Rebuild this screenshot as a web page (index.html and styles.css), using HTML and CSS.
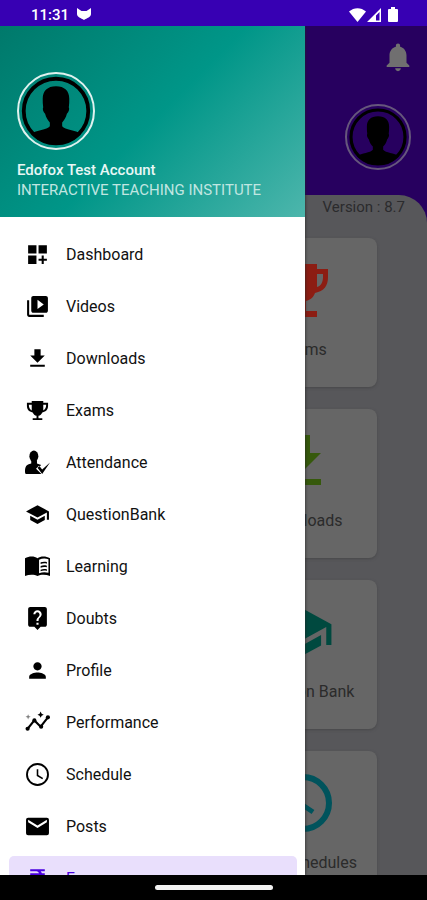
FILE: index.html
```html
<!DOCTYPE html>
<html lang="en">
<head>
<meta charset="utf-8">
<meta name="viewport" content="width=device-width, initial-scale=1">
<title>Edofox</title>
<link rel="stylesheet" href="styles.css">
</head>
<body>
<svg width="0" height="0" class="defs" aria-hidden="true">
  <symbol id="person" viewBox="0 0 78 78">
    <circle cx="39" cy="39" r="34" fill="none" stroke="#000" stroke-width="4"/>
    <path d="M39 13c-9 0-14 5-14 13 0 3 0 6 .5 9-1 2 0 5 2 7 1 4 3 7 5 9v4c-3 4-14 4-20 8 6 7 16 11 26.500 11s20.500-4 26.500-11c-6-4-17-4-20-8v-4c2-2 4-5 5-9 2-2 3-5 2-7 .5-3 .5-6 .5-9 0-8-5-13-14-13z"/>
  </symbol>
  <symbol id="cap" viewBox="0 0 24 24"><path d="M5 13.180v4L12 21l7-3.820v-4L12 17l-7-3.820zM12 3L1 9l11 6 9-4.910V17h2V9L12 3z"/></symbol>
</svg>
<div class="phone">
  <header class="status">
    <span class="clock">11:31</span>
    <svg class="fox" viewBox="0 0 14 13"><path d="M0 0l4.500 3h5L14 0v6c0 3-4 4-7 6-3-2-7-3-7-6z"/></svg>
    <span class="spacer"></span>
    <svg class="wifi" viewBox="0 0 17 14"><path d="M0 3.500C5-1 12-1 17 3.500L8.500 14z"/></svg>
    <svg class="signal" viewBox="0 0 14 14"><path fill-rule="evenodd" d="M14 0v14H0zM12.500 4L9 7.500v5h3.500z"/></svg>
    <svg class="battery" viewBox="0 0 10 15"><path d="M3 0h4v2h2q1 0 1 1v11q0 1-1 1H1q-1 0-1-1V3q0-1 1-1h2z"/></svg>
  </header>
  <main class="screen">
    <section class="home">
      <div class="home-top">
        <button class="bell" aria-label="Notifications"><svg viewBox="0 0 24 24"><path d="M12 22c1.100 0 2-.9 2-2h-4c0 1.100.9 2 2 2zm6-6v-5c0-3.070-1.630-5.640-4.500-6.320V4c0-.83-.67-1.500-1.500-1.500s-1.500.67-1.500 1.500v.68C7.640 5.360 6 7.920 6 11v5l-2 2v1h16v-1l-2-2z"/></svg></button>
        <svg class="avatar avatar-small"><use href="#person"/></svg>
      </div>
      <div class="sheet">
        <p class="version">Version : 8.7</p>
        <div class="cards">
          <a class="card red" href="#"><svg viewBox="0 0 54 54"><path d="M13 1h28v5h11v8c0 9-4 14-13 16-2 5-5 7-9 8v10h11v6H13v-6h11V38c-4-1-7-3-9-8C6 28 2 23 2 14V6h11zm28 10v13c4-1 6-5 6-10v-3zM7 11v3c0 5 2 9 6 10V11z"/></svg><span>Exams</span></a>
          <a class="card green" href="#"><svg viewBox="0 0 54 54"><path d="M21 1h13v18h11L27 37 9 19h12zM9 45h36v6H9z"/></svg><span>Downloads</span></a>
          <a class="card teal" href="#"><svg viewBox="0 0 24 24"><use href="#cap"/></svg><span>Question Bank</span></a>
          <a class="card cyan" href="#"><svg viewBox="0 0 54 54"><circle cx="27" cy="27" r="26" fill="none" stroke="currentColor" stroke-width="6"/><path fill="none" stroke="currentColor" stroke-width="5" d="M25 13v15l12 8"/></svg><span>Test Schedules</span></a>
        </div>
      </div>
    </section>
    <aside class="drawer">
      <div class="account">
        <svg class="avatar"><use href="#person"/></svg>
        <p class="name">Edofox Test Account</p>
        <p class="school">INTERACTIVE TEACHING INSTITUTE</p>
      </div>
      <nav class="menu">
        <a href="#"><svg viewBox="0 0 24 24"><path d="M3 3h8v8H3zM13 3h8v8h-8zM3 13h8v8H3zM16 13h2v3h3v2h-3v3h-2v-3h-3v-2h3z"/></svg>Dashboard</a>
        <a href="#"><svg viewBox="0 0 24 24"><path d="M4 6H2v14c0 1.100.9 2 2 2h14v-2H4V6zm16-4H8c-1.100 0-2 .9-2 2v12c0 1.100.9 2 2 2h12c1.100 0 2-.9 2-2V4c0-1.100-.9-2-2-2zm-8 12.500v-9l6 4.500-6 4.500z"/></svg>Videos</a>
        <a href="#"><svg viewBox="0 0 24 24"><path d="M19 9h-4V3H9v6H5l7 7 7-7zM5 18v2h14v-2H5z"/></svg>Downloads</a>
        <a href="#"><svg viewBox="-1 -1 26 26"><path d="M6 2h12v2h5v3c0 4-2 6-6 7-1 2-2 3-4 3.500V20h4v2H7v-2h4v-2.500C9 17 8 16 7 14c-4-1-6-3-6-7V4h5zm12 4v6c2-1 3-3 3-6zM3 6c0 3 1 5 3 6V6z"/></svg>Exams</a>
        <a href="#"><svg viewBox="0 0 24 24"><ellipse cx="8.500" cy="6" rx="4.300" ry="5.500"/><path d="M6 10h5.500v3l4 1.500-3 3 3.500 5.500H1q-1 0-1-2c0-5 1-7 6-8z"/><path d="M12 16.500l4.500 4.500L24 13" fill="none" stroke="#fff" stroke-width="4"/><path d="M12 17l2-1.500 2.500 3.200L24 12l-7.500 11z"/></svg>Attendance</a>
        <a href="#"><svg viewBox="0 0 24 24"><use href="#cap"/></svg>QuestionBank</a>
        <a href="#"><svg viewBox="0 0 24 24"><path fill-rule="evenodd" d="M0 4c4-2 9-2 12 0 3-2 8-2 12 0v17c-4-1.500-9-1.500-12 0-3-1.500-8-1.500-12 0zm13.500 1.500v13c3-1.200 6-1.200 9-.5V5c-3-1-6-1-9 .5z"/><path d="M15 8c2-.8 4-.8 6-.3v1.600c-2-.5-4-.5-6 .3zm0 3.500c2-.8 4-.8 6-.3v1.600c-2-.5-4-.5-6 .3zm0 3.500c2-.8 4-.8 6-.3v1.600c-2-.5-4-.5-6 .3z"/></svg>Learning</a>
        <a href="#"><svg viewBox="0 0 24 24"><path d="M19 1H5c-1.100 0-2 .9-2 2v15c0 1.100.9 2 2 2h4l3 3 3-3h4c1.100 0 2-.9 2-2V3c0-1.100-.9-2-2-2zm-6 17h-2v-2h2v2zm2.070-7.750l-.9.920C13.450 11.900 13 12.500 13 14.500h-2v-.5c0-1.100.45-2.100 1.170-2.830l1.240-1.260c.37-.36.590-.86.590-1.410 0-1.100-.9-2.500-2-2.500s-2 .9-2 2H8c0-2.210 1.790-4 4-4s4 1.790 4 4c0 .88-.36 1.680-.93 2.250z"/></svg>Doubts</a>
        <a href="#"><svg viewBox="0 0 24 24"><path d="M12 12c2.210 0 4-1.790 4-4s-1.790-4-4-4-4 1.790-4 4 1.790 4 4 4zm0 2c-2.670 0-8 1.340-8 4v2h16v-2c0-2.660-5.330-4-8-4z"/></svg>Profile</a>
        <a href="#"><svg viewBox="0 0 24 24"><path fill="none" stroke="currentColor" stroke-width="2" d="M2.500 18L9 10l6 6 7-9"/><circle cx="2.500" cy="18" r="2"/><circle cx="9" cy="10" r="2"/><circle cx="15.500" cy="16" r="2"/><circle cx="22" cy="7" r="2"/><path d="M15 1.500l1 2 2 1-2 1-1 2-1-2-2-1 2-1z"/><path opacity=".5" d="M3 4l.7 1.800L5.500 6.500l-1.800.7L3 9l-.7-1.800L.5 6.500l1.800-.7z"/></svg>Performance</a>
        <a href="#"><svg viewBox="0 0 24 24"><path d="M12 1a11 11 0 1 0 0 22 11 11 0 0 0 0-22zm0 1.800a9.200 9.200 0 1 1 0 18.400 9.200 9.200 0 0 1 0-18.400z"/><path fill="none" stroke="currentColor" stroke-width="1.500" d="M12 7v6l5 3"/></svg>Schedule</a>
        <a href="#"><svg viewBox="0 0 24 24"><path d="M3 3.500h18q2 0 2 2v13q0 2-2 2H3q-2 0-2-2v-13q0-2 2-2zm0 2v2.300l9 5.600 9-5.600V5.500l-9 5.600z"/></svg>Posts</a>
        <a href="#" class="active"><svg viewBox="0 0 24 24"><path d="M5 3h14v2h-4c.6.600 1 1.300 1.200 2H19v2h-3c-.3 2.700-2.400 4-5 4l6 8h-3l-6-8v-2h3c1.600 0 2.600-.8 3-2H5V7h8.500C13 5.700 12 5 11 5H5z"/></svg>Fees</a>
      </nav>
    </aside>
  </main>
  <footer class="gesture"><span></span></footer>
</div>
</body>
</html>
```
FILE: styles.css
```css
* { box-sizing: border-box; }
body { margin: 0; font-family: Roboto, "Liberation Sans", sans-serif; }
p { margin: 0; }
a { color: inherit; text-decoration: none; }
svg { display: block; fill: currentColor; flex: none; }
.defs { position: absolute; }
.phone { height: 100vh; display: flex; flex-direction: column; overflow: hidden; background: #000; }

.status { display: flex; align-items: center; height: 26px; flex: none; padding: 3px 29px 0 31px; background: #3700b3; color: #fff; }
.clock { font-size: 15px; font-weight: 500; line-height: 20px; }
.fox { width: 14px; height: 13px; margin-left: 8px; }
.spacer { flex: 1; }
.wifi { width: 17px; height: 14px; }
.signal { width: 14px; height: 14px; margin: 0 7px 0 1px; }
.battery { width: 10px; height: 15px; }

.screen { position: relative; flex: 1; min-height: 0; overflow: hidden; }
.home { min-height: 100%; background: #27005f; }
.home-top { display: flex; flex-direction: column; align-items: flex-end; gap: 30px; height: 169px; padding: 14px 12px 0 0; }
.bell { padding: 0; border: 0; background: none; color: #706f70; }
.bell svg { width: 34px; height: 34px; }
.avatar { width: 78px; height: 78px; border: 2px solid #e0f2ef; border-radius: 50%; color: #000; }
.avatar-small { width: 66px; height: 66px; border-color: #66577c; margin-right: 4px; }
.sheet { min-height: 680px; background: #57575a; border-top-right-radius: 28px; }
.version { padding: 2px 22px 0 0; text-align: right; font-size: 15px; line-height: 20px; color: #2b2b2d; }
.cards { display: grid; grid-template-columns: 1fr 1fr; gap: 22px 30px; padding: 21px 50px 0; }
.card { grid-column: 2; display: flex; flex-direction: column; align-items: center; height: 149px; padding-top: 25px; background: #666; border-radius: 8px; box-shadow: 0 1px 3px #48484a; }
.card svg { width: 54px; height: 54px; }
.card span { margin-top: 23px; font-size: 16px; line-height: 20px; color: #2b2b2b; white-space: nowrap; }
.red svg { color: #8c1d13; }
.green svg { color: #36590c; }
.teal svg { color: #00493f; width: 62px; height: 62px; margin: -4px 0; }
.cyan svg { color: #00535c; overflow: visible; }

.drawer { position: absolute; top: 0; bottom: 0; left: 0; width: calc(100% - 122px); overflow: hidden; background: #fff; box-shadow: 0 0 3px #222; }
.account { height: 191px; padding: 46px 17px 0; background: linear-gradient(135deg, #00796b 0%, #009688 50%, #4db6ac 100%); color: #e8f7f5; white-space: nowrap; }
.name { margin-top: 10px; font-size: 15px; font-weight: 500; line-height: 20px; color: #e8f7f5; }
.school { font-size: 15px; line-height: 20px; color: #c0e6e1; }
.menu { display: flex; flex-direction: column; gap: 8px; padding: 15px 8px 8px 9px; }
.menu a { display: flex; align-items: center; gap: 16px; height: 44px; flex: none; padding-left: 16px; border-radius: 5px; font-size: 16px; color: #111; }
.menu svg { width: 25px; height: 25px; color: #000; }
.menu .active, .menu .active svg { color: #4a00e0; }
.menu .active { background: #e9dffc; }

.gesture { display: flex; justify-content: center; align-items: center; height: 25px; flex: none; background: #000; }
.gesture span { width: 118px; height: 5px; border-radius: 3px; background: #f2f2f2; }
```
